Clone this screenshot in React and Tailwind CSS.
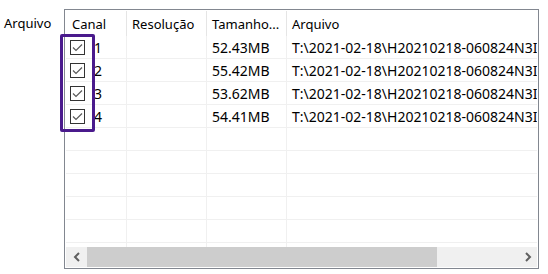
import React from 'react';

const rows = [
  { canal: '1', size: '52.43MB' },
  { canal: '2', size: '55.42MB' },
  { canal: '3', size: '53.62MB' },
  { canal: '4', size: '54.41MB' },
];

const path = 'T:\\2021-02-18\\H20210218-060824N3I';

function Check() {
  return (
    <div className="w-[15px] h-[15px] border border-[#333333] bg-white flex items-center justify-center shrink-0">
      <svg width="11" height="9" viewBox="0 0 11 9">
        <path d="M1 4.5 L4 7.5 L10 1.5" fill="none" stroke="#5a5a5a" strokeWidth="1.2" />
      </svg>
    </div>
  );
}

function Row({ row }) {
  return (
    <div className="flex h-[23px] border-b border-[#f0f0f0] shrink-0 text-[14px]">
      <div className="w-[61px] border-r border-[#f0f0f0] flex items-center pl-[4px] shrink-0">
        {row && (
          <>
            <Check />
            <span className="ml-[9px] pt-[1px]">{row.canal}</span>
          </>
        )}
      </div>
      <div className="w-[80px] border-r border-[#f0f0f0] shrink-0" />
      <div className="w-[80px] border-r border-[#f0f0f0] pl-[5px] flex items-center pt-[1px] shrink-0">
        {row && row.size}
      </div>
      <div className="pl-[5px] flex items-center pt-[1px] whitespace-nowrap">{row && path}</div>
    </div>
  );
}

export default function App() {
  const empty = [0, 1, 2, 3, 4, 5];
  return (
    <div className="w-[548px] h-[274px] bg-white flex pt-[9px] font-['Noto_Sans',sans-serif] text-[13px] text-black">
      <div className="w-[64px] h-[27px] pl-[4px] flex items-center pt-[2px] shrink-0">Arquivo</div>
      <div className="relative w-[475px] h-[260px] border border-[#828790] p-px flex flex-col">
        <div className="flex h-[25px] shrink-0 overflow-hidden">
          <div className="w-[61px] border-r border-[#e5e5e5] pl-[6px] flex items-center pt-[2px] shrink-0">Canal</div>
          <div className="w-[80px] border-r border-[#e5e5e5] pl-[5px] flex items-center pt-[2px] shrink-0">Resolução</div>
          <div className="w-[80px] border-r border-[#e5e5e5] pl-[5px] flex items-center pt-[2px] shrink-0">Tamanho...</div>
          <div className="pl-[5px] flex items-center pt-[2px]">Arquivo</div>
        </div>
        <div className="flex-1 overflow-hidden flex flex-col">
          {rows.map((r) => (
            <Row key={r.canal} row={r} />
          ))}
          {empty.map((i) => (
            <Row key={i} />
          ))}
          <div className="flex flex-1">
            <div className="w-[61px] border-r border-[#f0f0f0]" />
            <div className="w-[80px] border-r border-[#f0f0f0]" />
            <div className="w-[80px] border-r border-[#f0f0f0]" />
          </div>
        </div>
        <div className="h-[20px] shrink-0 flex bg-[#f0f0f0]">
          <div className="w-[21px] flex items-center justify-center">
            <svg width="8" height="10" viewBox="0 0 8 10">
              <path d="M6 1 L2 5 L6 9" fill="none" stroke="#606060" strokeWidth="2" />
            </svg>
          </div>
          <div className="w-[350px] bg-[#cdcdcd]" />
          <div className="flex-1 flex items-center justify-end pr-[5px]">
            <svg width="8" height="10" viewBox="0 0 8 10">
              <path d="M2 1 L6 5 L2 9" fill="none" stroke="#606060" strokeWidth="2" />
            </svg>
          </div>
        </div>
        <div className="absolute left-[-5px] top-[24px] w-[35px] h-[98px] border-[3px] border-[#4a1a8c] rounded-[2px]" />
      </div>
    </div>
  );
}
